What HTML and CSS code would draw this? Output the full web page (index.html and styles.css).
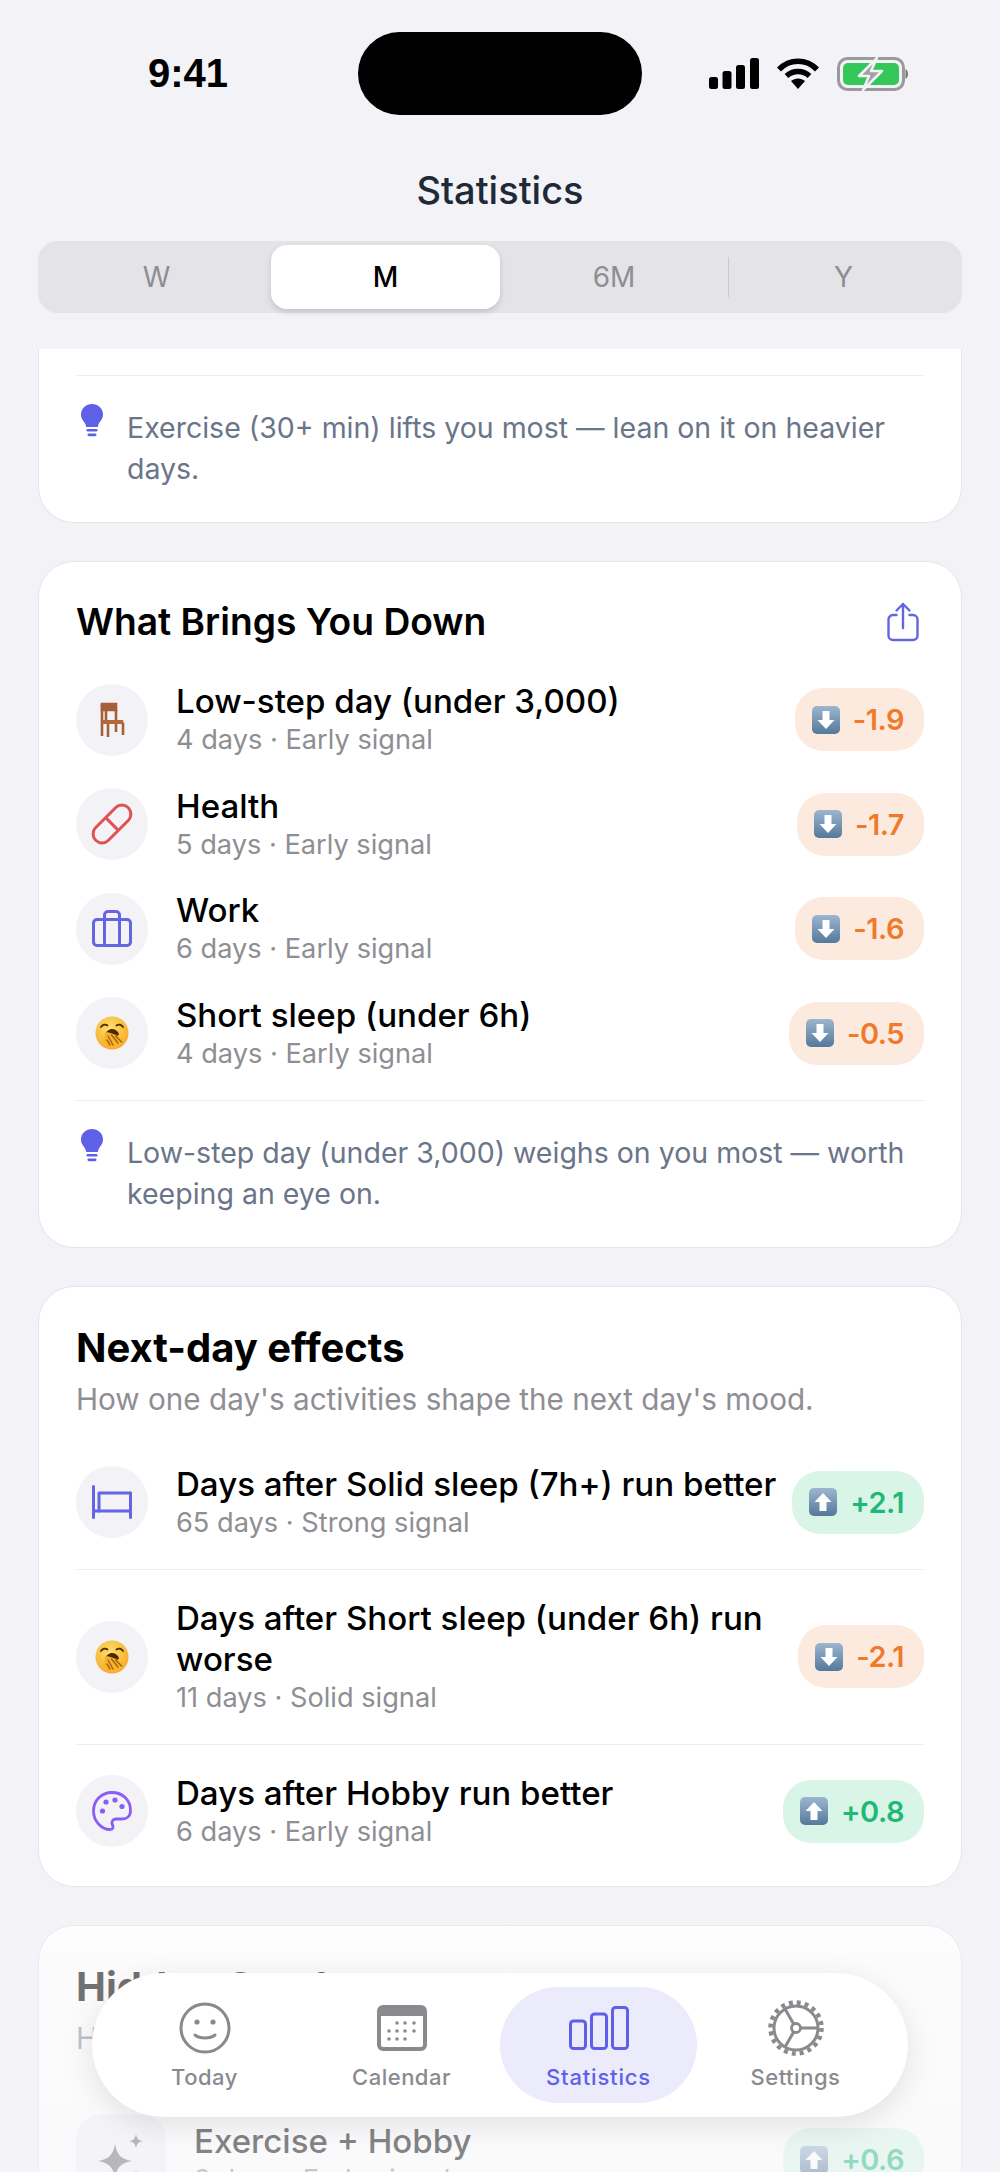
FILE: index.html
```html
<!DOCTYPE html>
<html lang="en">
<head>
    <meta charset="UTF-8">
    <title>Statistics</title>
    <link rel="stylesheet" href="styles.css">
</head>
<body>
<div class="screen">
    <svg class="defs" width="0" height="0">
        <defs>
            <linearGradient id="blueKey" x1="0" y1="0" x2="0" y2="1">
                <stop offset="0" stop-color="#9db6cf"/>
                <stop offset="1" stop-color="#54799b"/>
            </linearGradient>
            <radialGradient id="yawnFace" cx="0.45" cy="0.35" r="0.7">
                <stop offset="0" stop-color="#ffe06a"/>
                <stop offset="1" stop-color="#f5a623"/>
            </radialGradient>
            <symbol id="bulb" viewBox="0 0 22 33">
                <path d="M11 0C5 0 0 4.600 0 10.400c0 4.400 2.800 6.600 4.200 9.400.7 1.400.8 2.600 1 3.200h11.600c.2-.6.300-1.800 1-3.200C19.200 17 22 14.800 22 10.400 22 4.600 17 0 11 0z" fill="#5e60e8"/>
                <rect x="5.500" y="25" width="11" height="2.600" rx="1.300" fill="#5e60e8"/>
                <rect x="6.500" y="29.400" width="9" height="2.800" rx="1.400" fill="#5e60e8"/>
            </symbol>
            <symbol id="keyDown" viewBox="0 0 28 28">
                <rect width="28" height="28" rx="5" fill="url(#blueKey)"/>
                <path d="M10.500 5h7v9h5L14 23 5.500 14h5z" fill="#fff"/>
            </symbol>
            <symbol id="keyUp" viewBox="0 0 28 28">
                <rect width="28" height="28" rx="5" fill="url(#blueKey)"/>
                <path d="M10.500 23h7v-9h5L14 5 5.500 14h5z" fill="#fff"/>
            </symbol>
            <symbol id="yawn" viewBox="0 0 34 34">
                <circle cx="17" cy="17" r="16.500" fill="url(#yawnFace)"/>
                <path d="M6 11c1.500-2.500 4.500-3 6.500-1.500M21.500 9.500c2-1.500 5-1 6.500 1.500" fill="none" stroke="#4a2c0a" stroke-width="1.800" stroke-linecap="round"/>
                <path d="M10 20c1-5 4-7 7-7s6 2 7 5l-5 8h-6z" fill="#4f2608"/>
                <path d="M8 25c1-5 2-8 4-9 4 1 10 3 15 6 2 3-1 9-7 10-6 1-11-2-12-7z" fill="#f9b52c"/>
                <path d="M13 20l5 9M16.500 19l6.500 8M20.500 20l6 6M12 24l3 5" stroke="#a9640e" stroke-width="1.500" stroke-linecap="round"/>
            </symbol>
        </defs>
    </svg>

    <header class="top">
        <div class="status">
            <span class="time">9:41</span>
            <div class="island"></div>
            <div class="status-icons">
                <svg width="50" height="31" viewBox="0 0 50 31" fill="#000">
                    <rect x="0" y="19" width="9" height="12" rx="2.500"/>
                    <rect x="13.500" y="13" width="9" height="18" rx="2.500"/>
                    <rect x="27" y="7" width="9" height="24" rx="2.500"/>
                    <rect x="41" y="0" width="9" height="31" rx="2.500"/>
                </svg>
                <svg width="44" height="31" viewBox="0 0 44 31" fill="none" stroke="#000" stroke-width="5.500">
                    <path d="M3 11.500C13.500 .5 30.500 .5 41 11.500"/>
                    <path d="M10.500 18c6.500-6 16.500-6 23 0"/>
                    <path d="M22 31l-7-8c4-3.500 10-3.500 14 0z" fill="#000" stroke="none"/>
                </svg>
                <svg width="71" height="34" viewBox="0 0 71 34">
                    <rect x="1.500" y="1.500" width="65" height="31" rx="9" fill="none" stroke="#9a9a9a" stroke-width="3"/>
                    <rect x="6" y="6" width="56" height="22" rx="5" fill="#34c759"/>
                    <path d="M68.500 12c1.500.5 2.500 2.500 2.500 5s-1 4.500-2.500 5z" fill="#77777a"/>
                    <path d="M40 1L22 19h10l-6 14 19-19H34l6-13z" fill="#a2a2a6" stroke="#f2f2f7" stroke-width="2.500" stroke-linejoin="round"/>
                </svg>
            </div>
        </div>
        <h1 class="page-title">Statistics</h1>
        <div class="segmented">
            <div class="seg">W</div>
            <div class="seg seg-active">M</div>
            <div class="seg seg-line">6M</div>
            <div class="seg">Y</div>
        </div>
    </header>

    <main class="scroll">
        <section class="card card-cut">
            <div class="tip">
                <svg class="tip-icon"><use href="#bulb"/></svg>
                <p>Exercise (30+ min) lifts you most — lean on it on heavier days.</p>
            </div>
        </section>

        <section class="card">
            <div class="card-head">
                <h2 class="card-title">What Brings You Down</h2>
                <svg class="share" width="32" height="40" viewBox="0 0 32 40" fill="none" stroke="#6366e0" stroke-width="2.400" stroke-linecap="round" stroke-linejoin="round">
                    <path d="M9.500 13H6a4.500 4.500 0 0 0-4.500 4.500v16A4.500 4.500 0 0 0 6 38h20a4.500 4.500 0 0 0 4.500-4.500v-16A4.500 4.500 0 0 0 26 13h-3.500"/>
                    <path d="M16 26V2M9.500 8.500L16 2l6.500 6.500"/>
                </svg>
            </div>
            <div class="rows">
                <div class="row">
                    <div class="icon-circle">
                        <svg width="26" height="36" viewBox="0 0 26 36" fill="none" stroke="#a5603a" stroke-width="2.600">
                            <path d="M3 2h14v6H3z" fill="#a5603a"/>
                            <path d="M3 2v32M17 8v11M7 8v11"/>
                            <path d="M3 18h21l1 4H3z" fill="#b4683c" stroke="none"/>
                            <path d="M9 22v13M24 21v12M17 22v8"/>
                        </svg>
                    </div>
                    <div class="row-text">
                        <div class="row-name">Low-step day (under 3,000)</div>
                        <div class="row-sub">4 days · Early signal</div>
                    </div>
                    <div class="badge badge-down"><svg class="key"><use href="#keyDown"/></svg>-1.9</div>
                </div>
                <div class="row">
                    <div class="icon-circle">
                        <svg width="42" height="42" viewBox="0 0 42 42" fill="none" stroke="#e0524f" stroke-width="3">
                            <rect x="-2" y="12" width="46" height="18" rx="9" transform="rotate(-45 21 21)"/>
                            <path d="M14.600 14.600l12.800 12.800"/>
                        </svg>
                    </div>
                    <div class="row-text">
                        <div class="row-name">Health</div>
                        <div class="row-sub">5 days · Early signal</div>
                    </div>
                    <div class="badge badge-down"><svg class="key"><use href="#keyDown"/></svg>-1.7</div>
                </div>
                <div class="row">
                    <div class="icon-circle">
                        <svg width="40" height="37" viewBox="0 0 40 37" fill="none" stroke="#6366e0" stroke-width="3" stroke-linejoin="round">
                            <rect x="1.500" y="9.500" width="37" height="26" rx="3.500"/>
                            <path d="M12.500 35V9.500M27.500 35V9.500"/>
                            <path d="M12.500 9.500V5A3.500 3.500 0 0 1 16 1.500h8A3.500 3.500 0 0 1 27.500 5v4.500"/>
                        </svg>
                    </div>
                    <div class="row-text">
                        <div class="row-name">Work</div>
                        <div class="row-sub">6 days · Early signal</div>
                    </div>
                    <div class="badge badge-down"><svg class="key"><use href="#keyDown"/></svg>-1.6</div>
                </div>
                <div class="row">
                    <div class="icon-circle">
                        <svg class="yawn"><use href="#yawn"/></svg>
                    </div>
                    <div class="row-text">
                        <div class="row-name">Short sleep (under 6h)</div>
                        <div class="row-sub">4 days · Early signal</div>
                    </div>
                    <div class="badge badge-down"><svg class="key"><use href="#keyDown"/></svg>-0.5</div>
                </div>
            </div>
            <div class="tip">
                <svg class="tip-icon"><use href="#bulb"/></svg>
                <p>Low-step day (under 3,000) weighs on you most — worth keeping an eye on.</p>
            </div>
        </section>

        <section class="card">
            <h2 class="card-title card-title-big">Next-day effects</h2>
            <p class="card-sub">How one day's activities shape the next day's mood.</p>
            <div class="row row-lined">
                <div class="icon-circle">
                    <svg width="40" height="34" viewBox="0 0 40 34" fill="none" stroke="#6366e0" stroke-width="3" stroke-linecap="round" stroke-linejoin="round">
                        <path d="M1.500 1.500v31M38.500 8v24.500M1.500 26h37"/>
                        <path d="M7 26V8h31.500"/>
                    </svg>
                </div>
                <div class="row-text">
                    <div class="row-name">Days after Solid sleep (7h+) run better</div>
                    <div class="row-sub">65 days · Strong signal</div>
                </div>
                <div class="badge badge-up"><svg class="key"><use href="#keyUp"/></svg>+2.1</div>
            </div>
            <div class="row row-lined">
                <div class="icon-circle">
                    <svg class="yawn"><use href="#yawn"/></svg>
                </div>
                <div class="row-text">
                    <div class="row-name">Days after Short sleep (under 6h) run worse</div>
                    <div class="row-sub">11 days · Solid signal</div>
                </div>
                <div class="badge badge-down"><svg class="key"><use href="#keyDown"/></svg>-2.1</div>
            </div>
            <div class="row row-lined">
                <div class="icon-circle">
                    <svg width="40" height="40" viewBox="0 0 40 40" fill="none" stroke="#8b5cf6" stroke-width="2.800">
                        <path d="M20 1.500C9.500 1.500 1.500 9.500 1.500 20S10 38.500 18 38.500c3.500 0 3.500-2.500 2.500-4.500-1.500-3 0-6 3.500-6h6c5 0 8.500-3 8.500-8.500C38.500 9 30.500 1.500 20 1.500z"/>
                        <g fill="#8b5cf6" stroke="none">
                            <circle cx="10.500" cy="20" r="2.600"/>
                            <circle cx="14" cy="11" r="2.600"/>
                            <circle cx="23" cy="9" r="2.600"/>
                            <circle cx="30" cy="15.500" r="2.600"/>
                        </g>
                    </svg>
                </div>
                <div class="row-text">
                    <div class="row-name">Days after Hobby run better</div>
                    <div class="row-sub">6 days · Early signal</div>
                </div>
                <div class="badge badge-up"><svg class="key"><use href="#keyUp"/></svg>+0.8</div>
            </div>
        </section>

        <section class="card">
            <h2 class="card-title card-title-big">Hidden Combos</h2>
            <p class="card-sub">How one day's activities pair up.</p>
            <div class="row row-combo">
                <div class="icon-square">
                    <svg width="56" height="56" viewBox="0 0 56 56" fill="#6e6e73">
                        <path d="M22 12c2 11 6 15 17 17-11 2-15 6-17 17-2-11-6-15-17-17 11-2 15-6 17-17z"/>
                        <path d="M43 2c1 5 2.500 6.500 7 7-4.500 1-6 2.500-7 7-1-4.500-2.500-6-7-7 4.500-.5 6-2 7-7z"/>
                        <path d="M43 38c1 5 2.500 6.500 7 7-4.500 1-6 2.500-7 7-1-4.500-2.500-6-7-7 4.500-.5 6-2 7-7z"/>
                    </svg>
                </div>
                <div class="row-text">
                    <div class="row-name">Exercise + Hobby</div>
                    <div class="row-sub">9 days · Early signal</div>
                </div>
                <div class="badge badge-up"><svg class="key"><use href="#keyUp"/></svg>+0.6</div>
            </div>
        </section>
    </main>

    <div class="fade"></div>

    <nav class="tabbar">
        <div class="tab">
            <svg width="52" height="52" viewBox="0 0 52 52" fill="none" stroke="#8a8a8e" stroke-width="3">
                <circle cx="26" cy="26" r="24"/>
                <circle cx="18" cy="20" r="2.600" fill="#8a8a8e" stroke="none"/>
                <circle cx="34" cy="20" r="2.600" fill="#8a8a8e" stroke="none"/>
                <path d="M16 33c5 4 15 4 20 0" stroke-linecap="round"/>
            </svg>
            <span>Today</span>
        </div>
        <div class="tab">
            <svg width="50" height="46" viewBox="0 0 50 46" fill="#8a8a8e">
                <path d="M6 0h38a6 6 0 0 1 6 6v34a6 6 0 0 1-6 6H6a6 6 0 0 1-6-6V6a6 6 0 0 1 6-6zm-2 11v29a2 2 0 0 0 2 2h38a2 2 0 0 0 2-2V11z" fill-rule="evenodd"/>
                <circle cx="20" cy="18" r="1.800"/><circle cx="28" cy="18" r="1.800"/><circle cx="37" cy="18" r="1.800"/>
                <circle cx="12" cy="26" r="1.800"/><circle cx="20" cy="26" r="1.800"/><circle cx="28" cy="26" r="1.800"/><circle cx="37" cy="26" r="1.800"/>
                <circle cx="12" cy="34" r="1.800"/><circle cx="20" cy="34" r="1.800"/><circle cx="28" cy="34" r="1.800"/>
            </svg>
            <span>Calendar</span>
        </div>
        <div class="tab tab-active">
            <svg width="60" height="44" viewBox="0 0 60 44" fill="none" stroke="#5e60e8" stroke-width="3" stroke-linejoin="round">
                <rect x="1.500" y="15" width="15" height="27.500" rx="3"/>
                <rect x="22.500" y="8" width="15" height="34.500" rx="3"/>
                <rect x="43.500" y="1.500" width="15" height="41" rx="3"/>
            </svg>
            <span>Statistics</span>
        </div>
        <div class="tab">
            <svg width="56" height="56" viewBox="0 0 56 56" fill="none" stroke="#8a8a8e">
                <circle cx="28" cy="28" r="22" stroke-width="3"/>
                <circle cx="28" cy="28" r="25.500" stroke-width="4.500" stroke-dasharray="4 4.010"/>
                <circle cx="28" cy="28" r="4.500" stroke-width="2.800"/>
                <path d="M32.500 28H50M25.700 24.100L17 9M25.700 31.900L17 47" stroke-width="3"/>
            </svg>
            <span>Settings</span>
        </div>
    </nav>
</div>
</body>
</html>
```

FILE: styles.css
```css
* {
    box-sizing: border-box;
}
body {
    margin: 0;
    background: #f2f2f7;
    font-family: Inter, "Noto Sans", sans-serif;
}
h1, h2, p {
    margin: 0;
}
.defs {
    position: absolute;
}
.screen {
    position: relative;
    width: 1000px;
    height: 2172px;
    overflow: hidden;
    display: flex;
    flex-direction: column;
}

/* status bar + title + segmented */
.top {
    height: 349px;
    flex: none;
    padding: 32px 38px 0;
}
.status {
    height: 83px;
    display: flex;
    align-items: center;
    justify-content: space-between;
}
.time {
    width: 320px;
    padding-left: 110px;
    font-family: "Liberation Sans", sans-serif;
    font-size: 40px;
    font-weight: 700;
    color: #000;
}
.island {
    width: 284px;
    height: 83px;
    border-radius: 42px;
    background: #000;
}
.status-icons {
    width: 320px;
    padding-left: 67px;
    display: flex;
    align-items: center;
    gap: 17px;
}
.page-title {
    margin-top: 53px;
    height: 44px;
    line-height: 44px;
    text-align: center;
    font-size: 38px;
    font-weight: 500;
    color: #1f2937;
}
.segmented {
    margin-top: 29px;
    height: 72px;
    padding: 4px;
    display: grid;
    grid-template-columns: repeat(4, 1fr);
    background: #e3e3e8;
    border-radius: 20px;
}
.seg {
    display: flex;
    align-items: center;
    justify-content: center;
    font-size: 28px;
    font-weight: 400;
    color: #8e8e93;
}
.seg-active {
    background: #fff;
    border-radius: 16px;
    color: #000;
    font-weight: 500;
    box-shadow: 0 3px 6px rgba(0, 0, 0, 0.14);
}
.seg-line {
    border-right: 1px solid #c9c9ce;
    margin: 12px 0;
}

/* scrolling cards */
.scroll {
    flex: 1;
    min-height: 0;
    overflow: hidden;
    padding: 0 38px;
    display: flex;
    flex-direction: column;
    gap: 38px;
}
.card {
    flex: none;
    background: #fff;
    border: 1px solid #e6e6ea;
    border-radius: 36px;
    padding: 37px 37px 33px;
}
.card-cut {
    border-top: none;
    border-radius: 0 0 36px 36px;
    padding-top: 26px;
}
.card-head {
    display: flex;
    align-items: center;
    justify-content: space-between;
    margin-bottom: 36px;
}
.card-title {
    font-size: 37.200px;
    font-weight: 600;
    line-height: 46px;
    color: #000;
}
.card-title-big {
    font-size: 40px;
    font-weight: 700;
    line-height: 48px;
}
.card-sub {
    margin-top: 8px;
    margin-bottom: 18px;
    font-size: 29.700px;
    line-height: 38px;
    color: #8e8e93;
}
.share {
    margin-right: 5px;
}
.rows {
    display: flex;
    flex-direction: column;
    gap: 27.5px;
}
.row {
    display: flex;
    align-items: center;
}
.row-lined {
    padding: 28px 0;
    border-bottom: 1px solid #ededf0;
}
.row-lined:last-child {
    border-bottom: none;
    padding-bottom: 18px;
    margin-bottom: -15px;
}
.row-combo {
    padding-top: 40px;
}
.icon-circle {
    width: 72px;
    height: 72px;
    flex: none;
    border-radius: 50%;
    background: #f2f2f7;
    display: flex;
    align-items: center;
    justify-content: center;
}
.icon-square {
    width: 90px;
    height: 90px;
    flex: none;
    border-radius: 24px;
    background: #f2f2f7;
    display: flex;
    align-items: center;
    justify-content: center;
}
.yawn {
    width: 34px;
    height: 34px;
}
.row-text {
    flex: 1;
    min-width: 0;
    padding-left: 28px;
}
.row-name {
    font-size: 33.100px;
    font-weight: 500;
    line-height: 41px;
    color: #000;
}
.row-sub {
    font-size: 27.200px;
    line-height: 36px;
    color: #8e8e93;
}
.badge {
    height: 63px;
    flex: none;
    padding: 0 20px 0 17px;
    border-radius: 28px;
    display: flex;
    align-items: center;
    gap: 13px;
    font-size: 29px;
    font-weight: 600;
    letter-spacing: -0.5px;
}
.badge-down {
    background: #fdeade;
    color: #ef7a2c;
}
.badge-up {
    background: #d8f5e8;
    color: #1fb877;
}
.key {
    width: 28px;
    height: 28px;
}
.tip {
    margin-top: 28px;
    padding-top: 31px;
    border-top: 1px solid #ededf0;
    display: flex;
    gap: 24px;
}
.card-cut .tip {
    margin-top: 0;
}
.tip-icon {
    width: 22px;
    height: 33px;
    flex: none;
    margin: -3px 0 0 5px;
}
.tip p {
    font-size: 28.500px;
    line-height: 41px;
    color: #6b7589;
}

/* bottom fade and tab bar */
.fade {
    position: absolute;
    left: 0;
    right: 0;
    bottom: 0;
    height: 280px;
    background: linear-gradient(to bottom, rgba(246, 246, 249, 0), rgba(246, 246, 249, 0.45) 28%, rgba(246, 246, 249, 0.55));
}
.tabbar {
    position: absolute;
    left: 92px;
    top: 1973px;
    width: 816px;
    height: 144px;
    padding: 14px;
    display: grid;
    grid-template-columns: repeat(4, 1fr);
    background: #fff;
    border-radius: 72px;
    box-shadow: 0 8px 30px rgba(0, 0, 0, 0.1);
}
.tab {
    display: flex;
    flex-direction: column;
    align-items: center;
    justify-content: center;
    gap: 8px;
    border-radius: 58px;
    font-size: 22px;
    font-weight: 500;
    letter-spacing: 0.5px;
    color: #8a8a8e;
}
.tab svg {
    height: 56px;
}
.tab-active {
    background: #ebebfb;
    color: #5e60e8;
    letter-spacing: 0.8px;
}
```
